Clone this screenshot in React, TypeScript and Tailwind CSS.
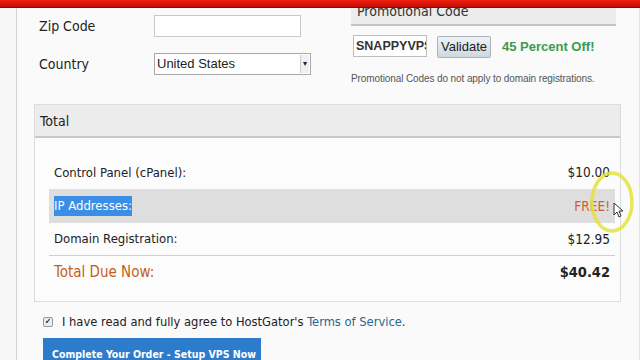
export default function App() {
  return (
    <div className="relative w-[640px] h-[360px] overflow-hidden bg-[#f3f3f3] font-['DejaVu_Sans_Condensed','DejaVu_Sans',sans-serif] text-[#222]">
      {/* browser accent bar */}
      <div className="h-[8px] bg-gradient-to-b from-[#f0200f] to-[#c30d05] border-b border-[#8a0a04]" />

      <div className="flex h-[352px]">
        <div className="w-[17px] border-r border-[#d4d4d4] bg-[#f6f6f6]" />
        <div className="flex-1 bg-[#fafafa] border-r border-[#e4e4e4]">
          {/* top: address + promo */}
          <div className="flex">
            <div className="w-[334px] pl-[22px] pt-[7px]">
              <div className="flex items-center h-[22px]">
                <span className="w-[115px] text-[14px]">Zip Code</span>
                <div className="w-[147px] h-[22px] bg-white border border-[#c9c9c9]" />
              </div>
              <div className="flex items-center h-[22px] mt-[16px]">
                <span className="w-[115px] text-[14px]">Country</span>
                <div className="w-[157px] h-[22px] bg-white border border-[#a9a9a9] flex items-center justify-between pl-[2px] font-['Liberation_Sans',sans-serif] text-[13px]">
                  <span>United States</span>
                  <span className="w-[9px] h-[18px] mr-[1px] border-l border-[#ccc] bg-[#f0f0f0] text-[8px] leading-[18px] text-center">▾</span>
                </div>
              </div>
            </div>
            <div className="flex-1 pr-[4px]">
              <div className="w-[265px] h-[18px] overflow-hidden bg-[#ececec] border-b-2 border-[#c4c4c4]">
                <div className="-mt-[7px] pl-[6px] text-[14px] text-[#333]">Promotional Code</div>
              </div>
              <div className="flex items-center mt-[7px] pl-[2px] font-['Liberation_Sans',sans-serif]">
                <div className="w-[74px] h-[22px] bg-white border border-[#bdbdbd] overflow-hidden text-[12.5px] font-bold text-[#333] pl-[2px] leading-[20px] whitespace-nowrap">SNAPPYVPS</div>
                <div className="ml-[10px] mt-[3px] w-[54px] h-[22px] bg-gradient-to-b from-[#eef2f5] to-[#cfd8df] border border-[#a8b4bd] rounded-[2px] text-[13px] leading-[20px] text-center text-[#222]">Validate</div>
                <span className="ml-[11px] mt-[2px] text-[13px] font-bold text-[#3d9a4c]">45 Percent Off!</span>
              </div>
              <div className="mt-[13px] font-['Liberation_Sans',sans-serif] text-[10px] text-[#555] tracking-[-0.1px]">
                Promotional Codes do not apply to domain registrations.
              </div>
            </div>
          </div>

          {/* totals box */}
          <div className="ml-[17px] mt-[18px] w-[587px] h-[198px] border border-[#dcdcdc] bg-[#fcfcfc]">
            <div className="h-[33px] bg-[#ececec] border-b-2 border-[#c9c9c9] pl-[5px] text-[14px] leading-[32px]">Total</div>
            <div className="pl-[14px] pr-[5px] pt-[18px] text-[13px]">
              <div className="flex justify-between items-center h-[33px] px-[5px]">
                <span>Control Panel (cPanel):</span>
                <span className="text-[13.5px]">$10.00</span>
              </div>
              <div className="flex justify-between items-center h-[34px] px-[5px] bg-[#dedede]">
                <span className="bg-[#3a8ee6] text-white">IP Addresses:</span>
                <span className="text-[13.5px] text-[#d2602a]">FREE!</span>
              </div>
              <div className="flex justify-between items-center h-[33px] px-[5px] border-b border-[#cfcfcf]">
                <span>Domain Registration:</span>
                <span className="text-[13.5px]">$12.95</span>
              </div>
              <div className="flex justify-between items-center h-[33px] px-[5px] text-[15px]">
                <span className="text-[#c45f22] font-medium">Total Due Now:</span>
                <span className="font-bold text-[14.5px]">$40.42</span>
              </div>
            </div>
          </div>

          {/* agree + submit */}
          <div className="flex items-center mt-[10px] ml-[26px] text-[12.8px]">
            <span className="w-[10px] h-[10px] border border-[#999] bg-[#eee] rounded-[2px] text-[8px] leading-[8px] text-center text-[#333]">✔</span>
            <span className="ml-[9px]">
              I have read and fully agree to HostGator's <span className="text-[#2a6593]">Terms of Service</span>.
            </span>
          </div>
          <div className="ml-[26px] mt-[7px] w-[218px] h-[24px] bg-[#2d7ccc] text-white text-[10.5px] font-bold pl-[9px] pt-[10px] leading-[13px] whitespace-nowrap overflow-hidden">
            Complete Your Order - Setup VPS Now
          </div>
        </div>
      </div>

      {/* cursor highlight overlay */}
      <svg className="absolute left-[588px] top-[170px]" width="50" height="66" viewBox="0 0 50 66">
        <ellipse cx="24" cy="32" rx="20" ry="29" fill="none" stroke="#e3e33a" strokeWidth="3.5" opacity="0.85" />
        <path d="M26 33 L26 45 L29 42 L31 47 L33 46 L31 41 L35 41 Z" fill="#fff" stroke="#333" strokeWidth="1" />
      </svg>
    </div>
  );
}
